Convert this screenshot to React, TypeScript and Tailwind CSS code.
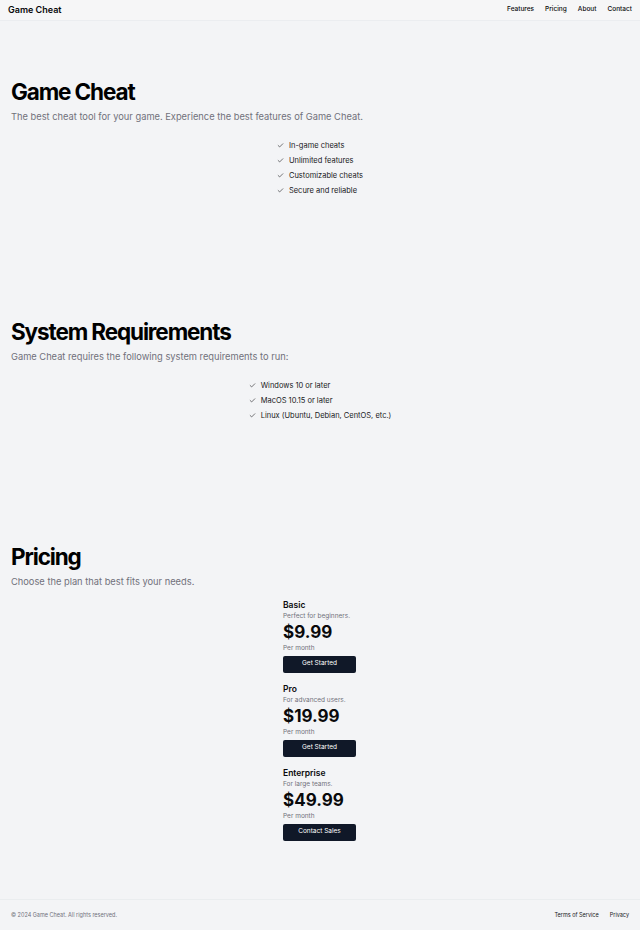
import { Check } from 'lucide-react';

const features = ['In-game cheats', 'Unlimited features', 'Customizable cheats', 'Secure and reliable'];
const requirements = ['Windows 10 or later', 'MacOS 10.15 or later', 'Linux (Ubuntu, Debian, CentOS, etc.)'];
const plans = [
  { name: 'Basic', desc: 'Perfect for beginners.', price: '$9.99', cta: 'Get Started' },
  { name: 'Pro', desc: 'For advanced users.', price: '$19.99', cta: 'Get Started' },
  { name: 'Enterprise', desc: 'For large teams.', price: '$49.99', cta: 'Contact Sales' },
];

function CheckList({ items }: { items: string[] }) {
  return (
    <ul className="flex flex-col items-center mt-[17px]">
      <div className="flex flex-col gap-[5px]">
        {items.map((item) => (
          <li key={item} className="flex items-center gap-[3px] h-[10px] text-[7.5px] text-zinc-900">
            <Check className="w-[7px] h-[7px] mr-[2px]" strokeWidth={2} />
            {item}
          </li>
        ))}
      </div>
    </ul>
  );
}

export default function App() {
  return (
    <div className="min-h-screen flex flex-col bg-gray-100 font-['Inter',sans-serif] text-zinc-950">
      <header className="h-[21px] px-[8px] flex items-center border-b border-gray-200/60 bg-gray-50/40">
        <span className="text-[9px] font-semibold">Game Cheat</span>
        <nav className="ml-auto flex gap-[11px] text-[6.5px] font-medium">
          <a>Features</a>
          <a>Pricing</a>
          <a>About</a>
          <a>Contact</a>
        </nav>
      </header>

      <main className="flex-1">
        <section className="pt-[56px] pb-[65px] px-[11px]">
          <h1 className="text-[22.5px] leading-[30px] font-bold tracking-tighter text-black">Game Cheat</h1>
          <p className="text-[9.3px] text-zinc-500 mt-[3px]">
            The best cheat tool for your game. Experience the best features of Game Cheat.
          </p>
          <CheckList items={features} />
        </section>

        <section className="pt-[56px] pb-[65px] px-[11px]">
          <h2 className="text-[22.5px] leading-[30px] font-bold tracking-tighter text-black">System Requirements</h2>
          <p className="text-[9.3px] text-zinc-500 mt-[3px]">
            Game Cheat requires the following system requirements to run:
          </p>
          <CheckList items={requirements} />
        </section>

        <section className="pt-[56px] pb-[52px] px-[11px]">
          <h2 className="text-[22.5px] leading-[30px] font-bold tracking-tighter text-black">Pricing</h2>
          <p className="text-[9.3px] text-zinc-500 mt-[3px]">Choose the plan that best fits your needs.</p>
          <div className="flex justify-center mt-[9px]">
            <div className="flex flex-col gap-[9px] w-[73px] ml-[-1px]">
              {plans.map((p) => (
                <div key={p.name} className="flex flex-col">
                  <h3 className="text-[8.5px] leading-[14px] font-semibold">{p.name}</h3>
                  <p className="text-[6.5px] leading-[9px] text-zinc-500">{p.desc}</p>
                  <p className="text-[17px] leading-[23px] font-bold">{p.price}</p>
                  <p className="text-[6.5px] leading-[9px] text-zinc-500">Per month</p>
                  <button className="mt-[3px] h-[17px] w-[73px] rounded-[2px] bg-gray-900 text-white text-[6.5px]">
                    {p.cta}
                  </button>
                </div>
              ))}
            </div>
          </div>
        </section>
      </main>

      <footer className="h-[31px] px-[11px] flex items-center border-t border-gray-200/60">
        <p className="text-[5.5px] text-zinc-500">© 2024 Game Cheat. All rights reserved.</p>
        <nav className="ml-auto flex gap-[11px] text-[5.5px] text-zinc-900">
          <a>Terms of Service</a>
          <a>Privacy</a>
        </nav>
      </footer>
    </div>
  );
}
